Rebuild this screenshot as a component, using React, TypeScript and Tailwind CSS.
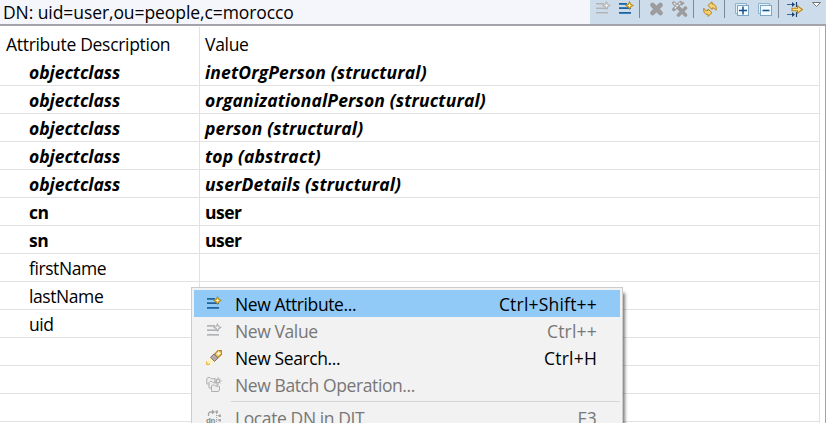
import React from 'react';

type IconProps = { className?: string };

function Svg({ className = '', children }: IconProps & { children: React.ReactNode }) {
  return (
    <svg width="16" height="17" viewBox="0 0 16 17" fill="none" className={`block shrink-0 ${className}`}>
      {children}
    </svg>
  );
}

function LinesIcon({ className, muted }: IconProps & { muted?: boolean }) {
  const a = muted ? '#b0b3b6' : '#1e62a0';
  const b = muted ? '#c6c9cc' : '#3a7cb6';
  return (
    <Svg className={className}>
      <path d="M1 3.5H9M1 8.5H13M1 12.5H13" stroke={a} strokeWidth="1" />
      <path d="M1 4.5H9M1 7.5H12M1 13.5H13" stroke={b} strokeWidth="1" />
      <path
        d="M11.5 2L12.7 4.3L15 5.5L12.7 6.7L11.5 9L10.3 6.7L8 5.5L10.3 4.3Z"
        fill={muted ? '#eeeeee' : '#fff3b5'}
        stroke={muted ? '#b4b4b4' : '#b88c18'}
        strokeWidth="1.1"
      />
    </Svg>
  );
}

function CrossIcon({ className }: IconProps) {
  return (
    <Svg className={className}>
      <path d="M3.5 5L11.5 13M11.5 5L3.5 13" stroke="#9c9c9c" strokeWidth="4.6" strokeLinecap="round" />
    </Svg>
  );
}

function DoubleCrossIcon({ className }: IconProps) {
  return (
    <Svg className={className}>
      <path d="M1.8 3L8 9M8.6 2.5L1.8 9.5" stroke="#9c9c9c" strokeWidth="3.4" strokeLinecap="round" />
      <path d="M2 3L8 9M8.3 2.8L2 9.3" stroke="#eeeeea" strokeWidth="1.4" strokeDasharray="2 1" />
      <path d="M6.5 8L13.5 15M13.5 8L6.5 15" stroke="#9c9c9c" strokeWidth="3.6" strokeLinecap="round" />
      <path d="M9 5L12 2.5" stroke="#9c9c9c" strokeWidth="2" />
    </Svg>
  );
}

function RefreshIcon({ className }: IconProps) {
  return (
    <Svg className={className}>
      <path
        d="M6 5.5L10 1.8V4C12.8 4 14.8 6 14 10.3C12.9 8.5 11.8 7.8 10 8V9.5Z"
        fill="#f3d273"
        stroke="#b9801c"
        strokeWidth="1"
        strokeLinejoin="round"
      />
      <path
        d="M10 12.7L6 16.4V14.4C3 14.5 1.2 12.3 1.8 8.2C3 10.4 4.2 10.8 6 10.6V9Z"
        fill="#f3d273"
        stroke="#b9801c"
        strokeWidth="1"
        strokeLinejoin="round"
      />
    </Svg>
  );
}

function BoxesIcon({ className, plus }: IconProps & { plus?: boolean }) {
  return (
    <Svg className={className}>
      <path d="M1.5 13.5V3.5H12.5V5.5H3.5V13.5Z" fill="#e4f0f8" stroke="#8fb2cb" />
      <rect x="3.5" y="5.5" width="11" height="10" fill="#f1faff" stroke="#7ba5c3" />
      <path d={plus ? 'M5 10.5H13M9 6.5V14.5' : 'M5.5 10.5H12.5'} stroke="#174f87" strokeWidth="1.5" />
    </Svg>
  );
}

function FilterIcon({ className }: IconProps) {
  return (
    <Svg className={className}>
      <path d="M0 4.5H7M0 14.5H7" stroke="#3c6a98" strokeWidth="1.2" />
      <path d="M5 2L8 4.5L5 7ZM5 12L8 14.5L5 17Z" fill="#1d456f" />
      <path d="M9.5 2V7M9.5 12V17" stroke="#1d456f" strokeWidth="1.2" />
      <path d="M5 8.2H10.5V5.8L15.3 9.5L10.5 13.2V10.8H5Z" fill="#fbe08b" stroke="#b9841c" strokeWidth="1.1" />
    </Svg>
  );
}

function FlashlightIcon() {
  return (
    <Svg>
      <path d="M0.5 13.5L4.5 8L9 12L5 15.5H0.5Z" fill="#fff2bd" />
      <path d="M0.5 12.5L1 15.5L4 15.2" stroke="#e4b43e" strokeWidth="1.2" />
      <path d="M8.5 5.5L12 1.7H15.5V5.2L11.5 9Z" fill="#f3cf72" stroke="#bd8720" strokeWidth="1.4" />
      <path d="M4.5 8.3L8 5L12 9L8.5 12.5Z" fill="#b5aaa5" stroke="#786b68" strokeWidth="0.9" />
      <path d="M12.6 2.3V6.3M10.6 4.3H14.6" stroke="#fff8d0" strokeWidth="1.2" />
    </Svg>
  );
}

function BatchIcon() {
  return (
    <Svg>
      <g fill="#eeeeee" stroke="#b0b0b0" strokeWidth="1">
        <path d="M0.8 8V2.5L2 1.5H4L5 2.7H9V8Z" />
        <path d="M3 12V6.5L4 5.5H6L7 6.7H11V12Z" />
        <path d="M5.5 15.5V10L6.5 9H8.5L9.5 10.2H13.5V14L12.5 15.5Z" />
        <path d="M12 1V9M8.3 5H15.7M9.5 2.5L14.5 7.5M14.5 2.5L9.5 7.5" />
        <circle cx="12" cy="5" r="1.7" />
      </g>
    </Svg>
  );
}

function LocateIcon() {
  return (
    <Svg>
      <path d="M2.5 7V4.5L4 3H7" stroke="#a3a3a3" strokeWidth="1.3" />
      <path d="M6 0.5L9 3L6 5.5Z" fill="#a3a3a3" />
      <path d="M10.5 2V15M10.5 6.5H13M10.5 11H13" stroke="#a3a3a3" strokeDasharray="1 1" />
      <path d="M9.5 1.5H12V4H9.5ZM12.5 5.5H15V8H12.5ZM12.5 10H15V12.5H12.5Z" fill="#aaaaaa" />
      <text x="0" y="14" fontSize="8" fontWeight="bold" fill="#888888" fontFamily="Liberation Sans, sans-serif" textLength="9">
        dn
      </text>
    </Svg>
  );
}

function Separator({ className }: IconProps) {
  return <div className={`h-[18px] w-px shrink-0 bg-[#7c8995] ${className}`} />;
}

const special = 'font-bold italic';
const bold = 'font-bold tracking-[-0.5px]';
const plain = 'tracking-[-0.42px]';
const rows = [
  { name: 'objectclass', value: 'inetOrgPerson (structural)', style: special },
  { name: 'objectclass', value: 'organizationalPerson (structural)', style: special },
  { name: 'objectclass', value: 'person (structural)', style: special },
  { name: 'objectclass', value: 'top (abstract)', style: special },
  { name: 'objectclass', value: 'userDetails (structural)', style: special },
  { name: 'cn', value: 'user', style: bold },
  { name: 'sn', value: 'user', style: bold },
  { name: 'firstName', value: '', style: plain },
  { name: 'lastName', value: '', style: plain },
  { name: 'uid', value: '', style: plain },
  { name: '', value: '', style: plain },
  { name: '', value: '', style: plain },
  { name: '', value: '', style: plain },
];

type ItemProps = { icon: React.ReactNode; label: string; shortcut?: string; disabled?: boolean; active?: boolean };

function MenuItem({ icon, label, shortcut, disabled, active }: ItemProps) {
  return (
    <div
      className={`flex h-[27px] shrink-0 items-center pr-[23px] pl-3 ${active ? 'bg-[#91c9f7]' : ''} ${
        disabled ? 'text-[#777777]' : 'text-black'
      }`}
    >
      {icon}
      <span className="ml-[13px] flex-1 tracking-[-0.4px] whitespace-pre">{label}</span>
      <span className="tracking-[0.2px] whitespace-pre">{shortcut}</span>
    </div>
  );
}

export default function App() {
  return (
    <div className="relative h-[423px] w-[827px] overflow-hidden bg-white font-['Open_Sans','Noto_Sans',sans-serif] text-[17.5px] leading-[26px] tracking-[-0.3px] text-black">
      <header className="flex h-[26px] w-[826px] border-b-2 border-[#a2a4a9] bg-[#cddceb]">
        <div className="flex w-[590px] shrink-0 items-center bg-[#f4f6fc] pb-px pl-[3px] tracking-[-0.08px] whitespace-pre">
          DN: uid=user,ou=people,c=morocco
        </div>
        <div className="flex items-start">
          <LinesIcon muted className="ml-[5px]" />
          <LinesIcon className="ml-[7px]" />
          <Separator className="ml-[5px]" />
          <CrossIcon className="ml-[9px]" />
          <DoubleCrossIcon className="ml-[7px]" />
          <Separator className="ml-[5px]" />
          <RefreshIcon className="ml-[8px]" />
          <Separator className="ml-[6px]" />
          <BoxesIcon plus className="ml-[9px]" />
          <BoxesIcon className="ml-[7px]" />
          <Separator className="ml-[5px]" />
          <FilterIcon className="ml-[8px]" />
          <Svg className="ml-[8px]">
            <path d="M1.5 2.5H9.5L5.5 6.5Z" fill="white" stroke="#777777" />
          </Svg>
        </div>
      </header>
      <main className="h-[397px] w-[826px] border-r border-[#a2a4a9] pt-px pr-[5px]">
        <div className="h-full border-r border-[#e2e2e2]">
          <div className="flex h-[31px]">
            <div className="w-[200px] border-r border-[#e2e2e2] pt-[4px] pl-[6px] whitespace-pre">Attribute Description</div>
            <div className="pt-[4px] pl-[5px]">Value</div>
          </div>
          {rows.map((row, i) => (
            <div key={i} className={`flex h-[28px] border-b border-[#e2e2e2] leading-[28px] whitespace-pre ${row.style}`}>
              <div className={`w-[200px] border-r border-[#e2e2e2] pl-[29px] ${row.style === special ? 'tracking-[-0.05px]' : ''}`}>
                {row.name}
              </div>
              <div className={`pl-[5px] ${row.style === special ? 'tracking-[0.14px]' : ''}`}>{row.value}</div>
            </div>
          ))}
        </div>
      </main>
      <div className="absolute top-[287px] left-[191px] h-[160px] w-[432px] border border-[#cccccc] bg-[#f2f2f2] p-[2px] shadow-[3px_5px_3px_-1px_rgba(0,0,0,0.5)]">
        <MenuItem active icon={<LinesIcon />} label="New Attribute..." shortcut="Ctrl+Shift++" />
        <MenuItem disabled icon={<LinesIcon muted />} label="New Value" shortcut="Ctrl++" />
        <MenuItem icon={<FlashlightIcon />} label="New Search..." shortcut="Ctrl+H" />
        <MenuItem disabled icon={<BatchIcon />} label="New Batch Operation..." />
        <div className="mt-[3px] mb-[2px] ml-[37px] h-px bg-[#d5d5d5]" />
        <MenuItem disabled icon={<LocateIcon />} label="Locate DN in DIT" shortcut="F3" />
      </div>
    </div>
  );
}
